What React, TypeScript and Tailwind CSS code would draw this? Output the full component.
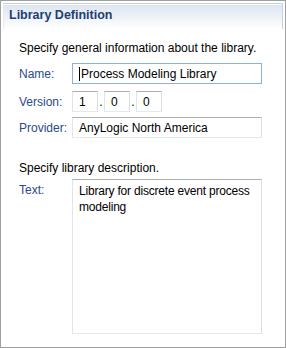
import React from 'react'

const font = { fontFamily: '"Liberation Sans", Arial, sans-serif' }

function Field({ value, focused, className = '' }: { value: string; focused?: boolean; className?: string }) {
    return (
        <div
            className={`h-[21px] flex items-center px-[6px] text-[12px] text-black bg-white border whitespace-nowrap ${
                focused
                    ? 'border-[#89b3dc]'
                    : 'border-t-[#abadb3] border-l-[#e2e3ea] border-r-[#dbdfe6] border-b-[#e3e9ef]'
            } ${className}`}
        >
            {focused && <span className="w-px h-[14px] bg-black mr-[1px]" />}
            {value}
        </div>
    )
}

export default function App() {
    return (
        <div className="w-[286px] h-[348px] bg-white border border-[#a0a0a0] flex flex-col" style={font}>
            <div className="mx-[2px] mt-[2px] h-[26px] border-t border-r border-l border-t-[#c5d2df] border-r-[#c5d2df] border-l-[#e6ecf3] bg-gradient-to-b from-[#dbe4ef] to-white">
                <div className="h-full border-t border-white pl-[5px] pt-[1px] text-[12.5px] font-bold text-[#1e3e75]">
                    Library Definition
                </div>
            </div>

            <div className="pl-[18px] pr-[23px] pt-[11px] text-[12px] text-black">
                <div className="h-[17px] leading-[17px] whitespace-nowrap">Specify general information about the library.</div>

                <div className="mt-[6px] flex items-center">
                    <div className="w-[53px] text-[#2a4a8c]">Name:</div>
                    <Field value="Process Modeling Library" focused className="flex-1" />
                </div>

                <div className="mt-[7px] flex items-center">
                    <div className="w-[53px] text-[#2a4a8c]">Version:</div>
                    <Field value="1" className="w-[26px]" />
                    <span className="w-[6px] text-center">.</span>
                    <Field value="0" className="w-[26px]" />
                    <span className="w-[6px] text-center">.</span>
                    <Field value="0" className="w-[26px]" />
                </div>

                <div className="mt-[5px] flex items-center">
                    <div className="w-[53px] text-[#2a4a8c]">Provider:</div>
                    <Field value="AnyLogic North America" className="flex-1" />
                </div>

                <div className="mt-[22px] h-[17px] leading-[17px]">Specify library description.</div>

                <div className="mt-[2px] flex items-start">
                    <div className="w-[53px] pt-[2px] text-[#2a4a8c]">Text:</div>
                    <div className="flex-1 h-[155px] pl-[6px] pr-[1px] pt-[3px] leading-[16px] tracking-[-0.2px] bg-white border border-t-[#abadb3] border-l-[#e2e3ea] border-r-[#dbdfe6] border-b-[#e3e9ef]">
                        Library for discrete event process modeling
                    </div>
                </div>
            </div>
        </div>
    )
}
